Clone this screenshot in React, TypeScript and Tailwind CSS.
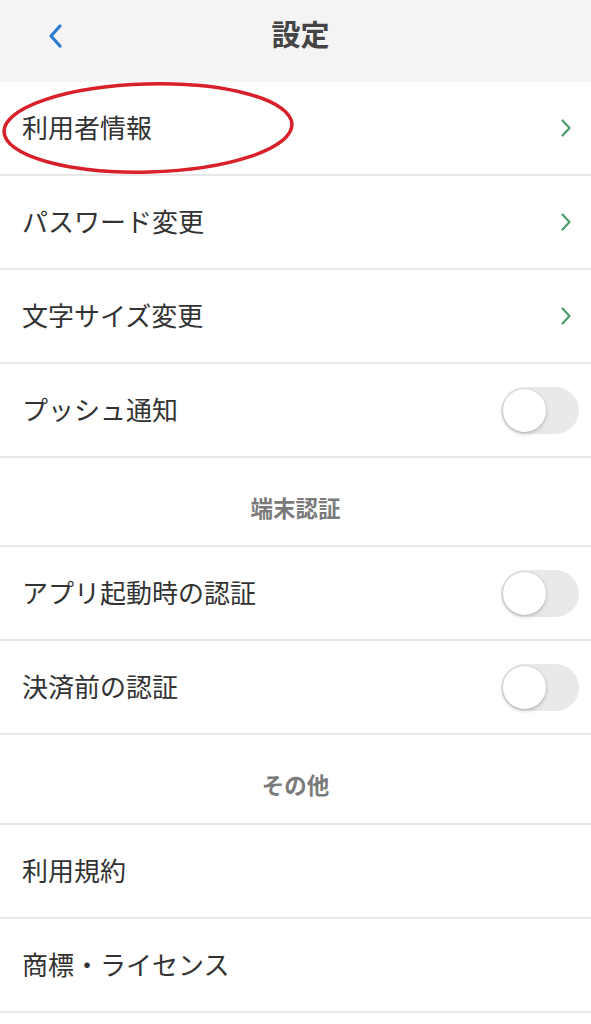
type Row = { label: string; kind: 'link' | 'toggle' | 'plain' } | { section: string; h: string };

const ROWS: Row[] = [
  { label: '利用者情報', kind: 'link' },
  { label: 'パスワード変更', kind: 'link' },
  { label: '文字サイズ変更', kind: 'link' },
  { label: 'プッシュ通知', kind: 'toggle' },
  { section: '端末認証', h: 'h-[89px]' },
  { label: 'アプリ起動時の認証', kind: 'toggle' },
  { label: '決済前の認証', kind: 'toggle' },
  { section: 'その他', h: 'h-[90px]' },
  { label: '利用規約', kind: 'plain' },
  { label: '商標・ライセンス', kind: 'plain' },
];

function Chevron() {
  return (
    <svg width="12" height="20" viewBox="0 0 12 20" className="-mr-[3px]">
      <path d="M2.5 2.5 L9.5 10 L2.5 17.5" fill="none" stroke="#4b9d6c" strokeWidth="2.2" strokeLinecap="round" strokeLinejoin="round" />
    </svg>
  );
}

function Toggle() {
  return (
    <div className="w-[78px] h-[47px] rounded-full bg-[#e9e9eb] p-[2px] -mr-[10px] flex items-center">
      <div className="w-[43px] h-[43px] rounded-full bg-white shadow-[0_2px_4px_rgba(0,0,0,0.18),0_0_0_1px_rgba(0,0,0,0.05)]" />
    </div>
  );
}

export default function App() {
  return (
    <div className="relative w-[591px] min-h-[1024px] bg-white text-[#333] font-['Noto_Sans_CJK_JP','Noto_Sans',sans-serif]">
      <header className="h-[82px] bg-[#f4f4f4] flex items-center relative">
        <svg width="20" height="28" viewBox="0 0 20 28" className="absolute left-[46px] top-[22px]">
          <path d="M14 4 L5 14 L14 24" fill="none" stroke="#2b7bd6" strokeWidth="3.2" strokeLinecap="round" strokeLinejoin="round" />
        </svg>
        <h1 className="w-full text-center text-[29px] font-bold text-[#444] -mt-[14px] pl-[10px]">設定</h1>
      </header>

      {ROWS.map((r, i) =>
        'section' in r ? (
          <div key={i} className={`${r.h} border-b-2 border-[#e8e8e8] flex items-center justify-center`}>
            <span className="text-[22.5px] font-bold text-[#7a7a7a] mt-[12px]">{r.section}</span>
          </div>
        ) : (
          <div key={i} className="h-[94px] border-b-2 border-[#e8e8e8] flex items-center justify-between pl-[22px] pr-[22px]">
            <span className="text-[26px] leading-none -mt-[2px]">{r.label}</span>
            {r.kind === 'link' && <Chevron />}
            {r.kind === 'toggle' && <Toggle />}
          </div>
        )
      )}

      {/* 赤丸の注釈 */}
      <svg width="300" height="100" viewBox="0 0 300 100" className="absolute left-0 top-[80px] pointer-events-none">
        <ellipse cx="148" cy="48" rx="144" ry="44" fill="none" stroke="#d8202a" strokeWidth="3.5" transform="rotate(-1.5 148 48)" />
      </svg>
    </div>
  );
}
